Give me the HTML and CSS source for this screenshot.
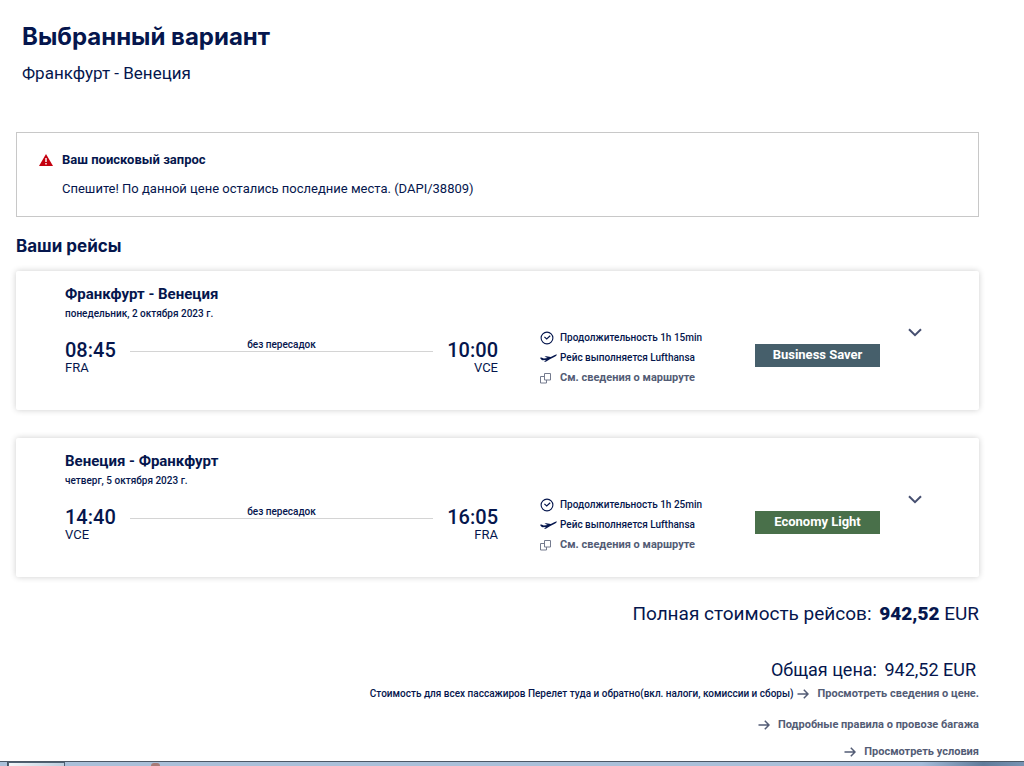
FILE: index.html
```html
<!DOCTYPE html>
<html lang="ru">
<head>
<meta charset="utf-8">
<meta name="viewport" content="width=device-width, initial-scale=1">
<title>Выбранный вариант</title>
<link rel="stylesheet" href="styles.css">
</head>
<body>
<svg class="sprite" aria-hidden="true">
  <symbol id="clock" viewBox="0 0 14 14"><circle cx="7" cy="7" r="5.9" fill="none" stroke="currentColor" stroke-width="1.1"/><path d="M4.400 5.900 6.700 8l3.500-3.200" fill="none" stroke="currentColor" stroke-width="1.200"/></symbol>
  <symbol id="plane" viewBox="0 0 17 10"><path d="M0 4.800 1.500 4.600 3.800 5.600 7.600 4.900 4.500 3.400 6.300 3.200 10.800 4 14.300 2.200C15.500 1.600 16.600 1.300 16.900 1.700 17.100 2.100 16.200 2.800 15.200 3.400L10.300 6 5.800 8.800H4L6 6.900 2.600 7.300C1.700 7.200.8 6 0 4.800Z" fill="currentColor"/></symbol>
  <symbol id="copy" viewBox="0 0 11 11"><path d="M4.500.5h6v6.500h-6ZM4.500 3.500h-4v6.500h6V7" fill="none" stroke="currentColor"/></symbol>
  <symbol id="arrow" viewBox="0 0 12 10"><path d="M.5 5h10.500M6.800.8 11 5 6.800 9.200" fill="none" stroke="currentColor" stroke-width="1.500"/></symbol>
  <symbol id="chevron" viewBox="0 0 14 9"><path d="m1 1.200 6 6 6-6" fill="none" stroke="currentColor" stroke-width="2"/></symbol>
</svg>
<main class="page">
  <header class="intro">
    <h1 class="title">Выбранный вариант</h1>
    <p class="subtitle">Франкфурт - Венеция</p>
  </header>

  <section class="alert" role="alert">
    <svg class="alert-icon" viewBox="0 0 14 12" aria-hidden="true"><path d="M7 0 14 12H0Z" fill="#c4000f"/><path d="M7 4v4M7 9v1.500" stroke="#fff" stroke-width="1.400"/></svg>
    <div class="alert-body">
      <h2 class="alert-title">Ваш поисковый запрос</h2>
      <p class="alert-text">Спешите! По данной цене остались последние места. (DAPI/38809)</p>
    </div>
  </section>

  <h2 class="section-title">Ваши рейсы</h2>

  <div class="flights">
    <article class="card">
      <h3 class="route">Франкфурт - Венеция</h3>
      <p class="date">понедельник, 2 октября 2023 г.</p>
      <div class="leg">
        <div class="stop"><time class="time">08:45</time><span class="code">FRA</span></div>
        <span class="path">без пересадок</span>
        <div class="stop stop-end"><time class="time">10:00</time><span class="code">VCE</span></div>
      </div>
      <ul class="details">
        <li class="detail"><svg class="icon-clock" aria-hidden="true"><use href="#clock"/></svg>Продолжительность 1h 15min</li>
        <li class="detail"><svg class="icon-plane" aria-hidden="true"><use href="#plane"/></svg>Рейс выполняется Lufthansa</li>
        <li class="detail"><svg class="icon-copy" aria-hidden="true"><use href="#copy"/></svg><a class="link" href="#route-1">См. сведения о маршруте</a></li>
      </ul>
      <span class="fare fare-business">Business Saver</span>
      <button class="toggle" type="button" aria-label="Показать подробности"><svg class="icon-chevron" aria-hidden="true"><use href="#chevron"/></svg></button>
    </article>

    <article class="card">
      <h3 class="route">Венеция - Франкфурт</h3>
      <p class="date">четверг, 5 октября 2023 г.</p>
      <div class="leg">
        <div class="stop"><time class="time">14:40</time><span class="code">VCE</span></div>
        <span class="path">без пересадок</span>
        <div class="stop stop-end"><time class="time">16:05</time><span class="code">FRA</span></div>
      </div>
      <ul class="details">
        <li class="detail"><svg class="icon-clock" aria-hidden="true"><use href="#clock"/></svg>Продолжительность 1h 25min</li>
        <li class="detail"><svg class="icon-plane" aria-hidden="true"><use href="#plane"/></svg>Рейс выполняется Lufthansa</li>
        <li class="detail"><svg class="icon-copy" aria-hidden="true"><use href="#copy"/></svg><a class="link" href="#route-2">См. сведения о маршруте</a></li>
      </ul>
      <span class="fare fare-light">Economy Light</span>
      <button class="toggle" type="button" aria-label="Показать подробности"><svg class="icon-chevron" aria-hidden="true"><use href="#chevron"/></svg></button>
    </article>
  </div>

  <section class="summary">
    <p class="total">Полная стоимость рейсов: <span class="amount"><strong>942,52</strong> EUR</span></p>
    <p class="price">Общая цена: <span class="amount">942,52 EUR</span></p>
    <div class="price-row"><p class="note">Стоимость для всех пассажиров Перелет туда и обратно(вкл. налоги, комиссии и сборы)</p><a class="link more" href="#price"><svg class="icon-arrow" aria-hidden="true"><use href="#arrow"/></svg>Просмотреть сведения о цене.</a></div>
    <a class="link more baggage" href="#baggage"><svg class="icon-arrow" aria-hidden="true"><use href="#arrow"/></svg>Подробные правила о провозе багажа</a>
    <a class="link more" href="#terms"><svg class="icon-arrow" aria-hidden="true"><use href="#arrow"/></svg>Просмотреть условия</a>
  </section>
</main>
<footer class="taskbar"><span class="task-edge"></span><span class="task-button"></span><span class="task-app"></span></footer>
</body>
</html>
```
FILE: styles.css
```css
* { box-sizing: border-box; }
body, h1, h2, h3, p, ul { margin: 0; padding: 0; }
body {
  min-height: 100vh;
  display: flex;
  flex-direction: column;
  background: #fff;
  color: #05164d;
  font-family: Roboto, "Liberation Sans", sans-serif;
  font-size: 10px;
  line-height: 16px;
}
.sprite { position: absolute; width: 0; height: 0; }
.page { flex: 1; padding: 21px 45px 0 16px; }
.intro { padding-left: 6px; }
.title { font: 700 24px/32px Inter, sans-serif; }
.subtitle { margin-top: 8px; font-size: 17px; line-height: 24px; }
.alert {
  display: flex;
  gap: 9px;
  margin-top: 47px;
  padding: 18px 22px;
  border: 1px solid #c8c8c8;
}
.alert-icon { width: 14px; height: 12px; margin-top: 3px; }
.alert-title { font-size: 13px; line-height: 18px; font-weight: 700; }
.alert-text { margin-top: 11px; font-size: 13px; line-height: 18px; }
.section-title { margin-top: 17px; font: 700 17px/24px Inter, sans-serif; }
.flights { display: grid; gap: 28px; margin-top: 13px; }
.card {
  display: grid;
  grid-template-columns: minmax(0, 1fr) 257px 125px 42px;
  grid-template-areas:
    "route . . ."
    "date . . toggle"
    "leg details fare toggle";
  padding: 12px 57px 24px 49px;
  border-radius: 2px;
  box-shadow: 0 0 6px rgba(0, 0, 0, .2);
}
.route { grid-area: route; font-size: 15px; line-height: 22px; font-weight: 700; }
.date { grid-area: date; line-height: 18px; font-weight: 500; }
.leg { grid-area: leg; display: flex; margin-top: 16px; }
.stop { display: flex; flex-direction: column; }
.stop-end { align-items: flex-end; }
.time { font-size: 20px; line-height: 22px; font-weight: 500; }
.code { font-size: 13px; line-height: 13px; }
.path {
  flex: 1;
  height: 13px;
  margin: 0 14px;
  border-bottom: 1px solid #d4d4d4;
  text-align: center;
  line-height: 12px;
  font-weight: 500;
}
.details { grid-area: details; display: grid; align-content: start; gap: 4px; margin-top: 7px; padding-left: 42px; list-style: none; }
.detail { display: grid; grid-template-columns: 20px auto; align-items: center; justify-content: start; white-space: nowrap; font-weight: 500; }
.icon-clock { width: 14px; height: 14px; }
.icon-plane { width: 17px; height: 10px; }
.icon-copy { width: 11px; height: 11px; color: #747b8e; }
.icon-arrow { width: 12px; height: 10px; }
.icon-chevron { display: block; width: 14px; height: 9px; }
.link { color: #535c75; font-size: 11px; font-weight: 700; text-decoration: none; }
.link:hover { text-decoration: underline; }
.fare { grid-area: fare; height: 23px; margin-top: 21px; color: #fff; font-size: 13px; line-height: 22px; font-weight: 700; text-align: center; }
.fare-business { background: #465f6b; }
.fare-light { background: #49704a; }
.toggle { grid-area: toggle; align-self: start; justify-self: end; margin-top: 23px; padding: 0; border: 0; background: none; color: #464f70; cursor: pointer; }
.summary { display: flex; flex-direction: column; align-items: flex-end; margin-top: 23px; }
.total { font-size: 19px; line-height: 28px; }
.total strong { font-weight: 900; }
.price { margin-top: 28px; padding-right: 3px; font-size: 18px; line-height: 28px; }
.amount { margin-left: 3px; }
.price-row { display: flex; gap: 4px; margin-top: 2px; }
.note { font-weight: 500; }
.more { display: inline-flex; align-items: center; gap: 8px; }
.baggage { margin: 15px 0 11px; }
.taskbar { display: flex; align-items: flex-start; height: 5px; border-top: 1px solid #4c5866; background: linear-gradient(90deg, #aac0d9 0 80%, #a5bcda 90%, #607b9a 96%, #7893b3); }
.task-edge { width: 8px; height: 4px; border-right: 1px solid #465462; }
.task-button { width: 57px; height: 4px; border: 1px solid #4d6072; border-bottom: 0; background: linear-gradient(90deg, #f2f5f7, #bdcede); }
.task-app { width: 9px; height: 3px; margin: 1px 0 0 86px; border-radius: 5px 5px 0 0; background: #a77c78; }
```
